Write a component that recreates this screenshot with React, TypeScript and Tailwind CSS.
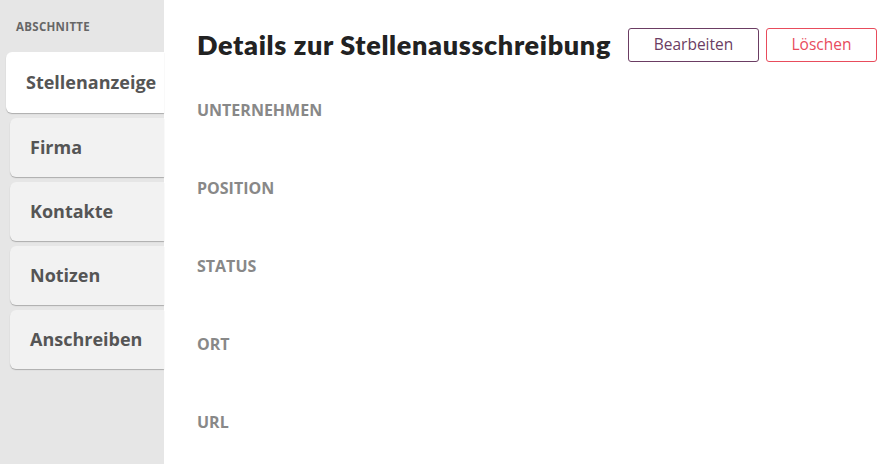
import React from "react";

const tabs = ["Stellenanzeige", "Firma", "Kontakte", "Notizen", "Anschreiben"];
const fields = ["UNTERNEHMEN", "POSITION", "STATUS", "ORT", "URL"];

function App() {
  const active = 0;

  return (
    <div className="flex h-[464px] w-[881px] overflow-hidden bg-white font-['Open_Sans',sans-serif]">
      {/* Seitenleiste */}
      <aside className="w-[164px] shrink-0 bg-[#e6e6e6]">
        <p className="pl-4 pt-[18px] text-[11.5px] font-bold tracking-[0.3px] text-[#666]">ABSCHNITTE</p>
        <nav className="mt-[17px] flex flex-col gap-[5px]">
          {tabs.map((t, i) =>
            i === active ? (
              <div
                key={t}
                className="ml-[6px] flex h-[61px] items-center rounded-l-md bg-white pl-5 text-[18px] font-bold text-[#555] shadow-[0_1px_1px_rgba(0,0,0,0.25)]"
              >
                {t}
              </div>
            ) : (
              <div
                key={t}
                className="ml-[10px] flex h-[59px] items-center rounded-l-md bg-[#f2f2f2] pl-5 text-[18px] font-bold text-[#555] shadow-[0_1px_1px_rgba(0,0,0,0.25)]"
              >
                {t}
              </div>
            )
          )}
        </nav>
      </aside>

      {/* Inhalt */}
      <main className="min-w-0 flex-1 pl-[33px]">
        <div className="flex items-center pt-[28px]">
          <h1 className="shrink-0 whitespace-nowrap font-['Lato',sans-serif] text-[27px] font-extrabold leading-[34px] tracking-[0.65px] text-[#222]">
            Details zur Stellenausschreibung
          </h1>
          <button className="ml-[17px] h-[34px] w-[131px] shrink-0 rounded-[3px] border border-[#6b3d63] text-[15.5px] text-[#6b3d63]">
            Bearbeiten
          </button>
          <button className="ml-[7px] h-[34px] w-[111px] shrink-0 rounded-[3px] border border-[#e84c5c] text-[15.5px] text-[#e84c5c]">
            Löschen
          </button>
        </div>
        <div className="mt-[37px] flex flex-col gap-[56px]">
          {fields.map((f) => (
            <div key={f} className="text-[16px] font-bold leading-[22px] text-[#888]">
              {f}
            </div>
          ))}
        </div>
      </main>
    </div>
  );
}

export default App;
